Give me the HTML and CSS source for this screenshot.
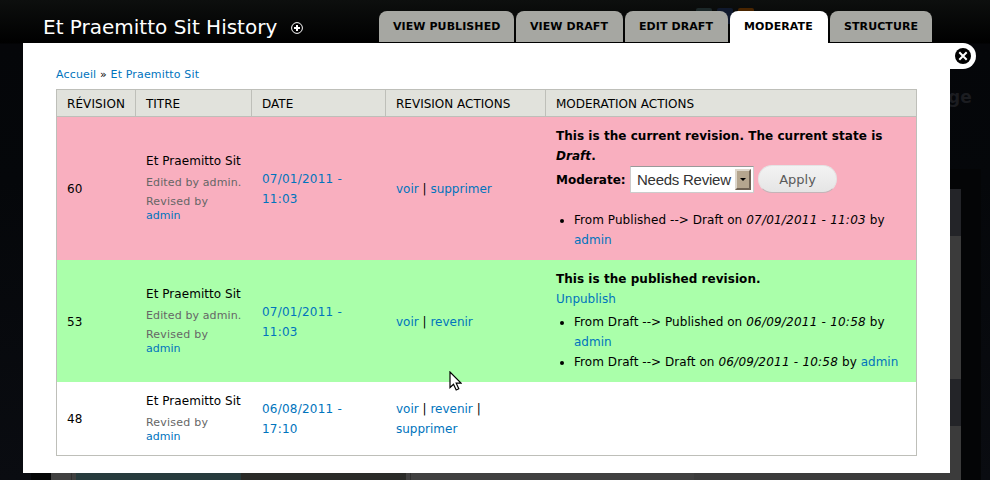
FILE: index.html
```html
<!DOCTYPE html>
<html lang="fr">
<head>
<meta charset="utf-8">
<title>Et Praemitto Sit History</title>
<link rel="stylesheet" href="styles.css">
</head>
<body>
<div class="backdrop" aria-hidden="true">
  <span class="social teal"></span><span class="social blue"></span><span class="social orange"></span>
  <span class="site-word">ge</span>
  <span class="site-edge"></span>
  <span class="site-side"></span>
  <span class="site-foot"></span>
</div>
<div class="overlay">
  <header class="overlay-head">
    <h1>Et Praemitto Sit History</h1>
    <svg class="shortcut" width="12" height="12" viewBox="0 0 12 12"><circle cx="6" cy="6" r="5.4" fill="#000" stroke="#fff"/><path d="M6 3v6M3 6h6" stroke="#fff" stroke-width="2"/></svg>
    <nav class="tabs">
      <a class="tab t1">VIEW PUBLISHED</a>
      <a class="tab t2">VIEW DRAFT</a>
      <a class="tab t3">EDIT DRAFT</a>
      <a class="tab t4 active">MODERATE</a>
      <a class="tab t5">STRUCTURE</a>
    </nav>
  </header>
  <main class="panel">
    <div class="close"><svg width="16" height="16" viewBox="0 0 16 16"><circle cx="8" cy="8" r="8" fill="#000"/><path d="M4.3 4.3l7.4 7.4M11.7 4.3l-7.4 7.4" stroke="#fff" stroke-width="2"/></svg></div>
    <div class="breadcrumb"><a>Accueil</a> » <a>Et Praemitto Sit</a></div>
    <table class="revisions">
      <colgroup><col class="c-rev"><col class="c-title"><col class="c-date"><col class="c-act"><col class="c-mod"></colgroup>
      <thead><tr><th>RÉVISION</th><th>TITRE</th><th>DATE</th><th>REVISION ACTIONS</th><th>MODERATION ACTIONS</th></tr></thead>
      <tbody>
        <tr class="current">
          <td>60</td>
          <td class="title">Et Praemitto Sit<p>Edited by admin.</p><p>Revised by <br><a>admin</a></p></td>
          <td class="date"><a>07/01/2011 -<br>11:03</a></td>
          <td><a>voir</a> | <a>supprimer</a></td>
          <td class="moderation"><strong>This is the current revision. The current state is<br><em>Draft</em>.</strong>
            <form class="moderate"><label>Moderate:</label><span class="select"><span>Needs Review</span><i class="arrow"></i></span><button type="button">Apply</button></form>
            <ul><li>From Published --&gt; Draft on <em>07/01/2011 - 11:03</em> by<br><a>admin</a></li></ul>
          </td>
        </tr>
        <tr class="published">
          <td>53</td>
          <td class="title">Et Praemitto Sit<p>Edited by admin.</p><p>Revised by <br><a>admin</a></p></td>
          <td class="date"><a>07/01/2011 -<br>11:03</a></td>
          <td><a>voir</a> | <a>revenir</a></td>
          <td class="moderation"><strong>This is the published revision.</strong><br><a>Unpublish</a>
            <ul><li>From Draft --&gt; Published on <em>06/09/2011 - 10:58</em> by<br><a>admin</a></li><li>From Draft --&gt; Draft on <em>06/09/2011 - 10:58</em> by <a>admin</a></li></ul>
          </td>
        </tr>
        <tr class="older">
          <td>48</td>
          <td class="title">Et Praemitto Sit<p>Revised by <br><a>admin</a></p></td>
          <td class="date"><a>06/08/2011 -<br>17:10</a></td>
          <td><a>voir</a> | <a>revenir</a> |<br><a>supprimer</a></td>
          <td></td>
        </tr>
      </tbody>
    </table>
  </main>
</div>
<svg class="cursor" width="13" height="20" viewBox="0 0 13 20"><path d="M1 1v15.5l3.5-3.3 2.7 5.8 2.6-1.2-2.6-5.6h4.8z" fill="#fff" stroke="#000" stroke-width="1.2"/></svg>
</body>
</html>
```

FILE: styles.css
```css
* { box-sizing: border-box; }
body {
  margin: 0;
  width: 990px;
  height: 480px;
  overflow: hidden;
  position: relative;
  background: linear-gradient(#0d0f0e, #000 43px, #050609 44px, #05070a 180px, #0a0c11 480px);
  font: 12px/20px "DejaVu Sans", sans-serif;
  color: #000;
}
a { color: #0074bd; text-decoration: none; }

/* dimmed site behind the overlay */
.backdrop { position: absolute; inset: 0; }
.backdrop span { position: absolute; }
.social { top: 8px; width: 16px; height: 16px; border-radius: 2px; }
.teal { left: 696px; background: #1c2829; }
.blue { left: 717px; background: #10192d; }
.orange { left: 738px; background: #4a2500; }
.site-word { left: 948px; top: 87px; font-size: 17px; font-weight: bold; color: #1b1c20; }
.site-edge { left: 31px; top: 169px; width: 950px; height: 311px; background: #040506; }
.site-side {
  left: 940px; top: 189px; width: 21px; height: 291px;
  background: linear-gradient(#232428 47px, #3b3b3b 47px 190px, #232428 190px 237px, #3b3b3b 237px);
}
.site-foot {
  left: 51px; top: 473px; width: 910px; height: 7px;
  background: linear-gradient(90deg, #404040 20px, #303030 20px 21px, #404040 21px 25px, #273b3d 25px 190px, #2a2b28 190px 355px, #404040 355px 359px, #303030 359px 360px, #404040 360px 643px, #3b3b3b 643px);
}

.overlay { position: relative; width: 927px; margin-left: 23px; }
.overlay-head { display: flex; height: 43px; padding-left: 20px; align-items: flex-start; }
h1 { margin: 15px 0 0; width: 248px; font-size: 20px; line-height: 24px; font-weight: normal; color: #fff; white-space: nowrap; }
.shortcut { margin-top: 22px; }
.tabs { display: flex; gap: 2px; margin: 11px 0 0 76px; }
.tab {
  height: 31px; padding-left: 14px; border-radius: 8px 8px 0 0;
  background: #a6a7a2; color: #000; font-size: 11px; font-weight: bold; line-height: 32px; letter-spacing: 0.08px; white-space: nowrap;
}
.tab.active { height: 32px; background: #fff; }
.t1 { width: 135px; }
.t2 { width: 107px; }
.t3 { width: 103px; }
.t4 { width: 98px; }
.t5 { width: 102px; }

.panel { position: relative; height: 430px; padding: 22px 33px 0; background: #fff; }
.close {
  position: absolute; left: 927px; top: 0; width: 26px; height: 26px; padding: 5px 0 0 5px;
  border-radius: 0 13px 13px 0; background: #fff;
}
.close svg { display: block; }
.breadcrumb { height: 24px; font-size: 11px; line-height: 20px; letter-spacing: 0.15px; }

.revisions { width: 861px; table-layout: fixed; border-collapse: separate; border-spacing: 0; border: 1px solid #bebfb9; }
.c-rev { width: 79px; }
.c-title { width: 116px; }
.c-date { width: 134px; }
.c-act { width: 160px; }
.c-mod { width: 370px; }
th {
  height: 27px; padding: 2px 0 0 10px; text-align: left; font-weight: normal;
  background: #e1e2dc; border-right: 1px solid #bebfb9; border-bottom: 1px solid #bebfb9; white-space: nowrap;
}
th:first-child { letter-spacing: 0.1px; }
th:last-child { border-right: 0; }
td { padding: 0 0 0 10px; vertical-align: middle; white-space: nowrap; }
.current td { height: 143px; background: #f9afbf; }
.published td { height: 122px; padding-top: 1px; background: #aaffaa; }
.older td { height: 73px; }
td.title { padding-bottom: 3px; letter-spacing: 0.05px; }
.published td.title { padding-bottom: 4px; }
.older td.title { padding-bottom: 2px; }
.title p { margin: 5px 0 0; font-size: 11px; line-height: 14px; letter-spacing: 0.12px; color: #666; }
.title p + p { letter-spacing: 0.22px; }
.title p + p a, .older p a { letter-spacing: 0; }
.older .title p { letter-spacing: 0.22px; }
.date { letter-spacing: 0.22px; }
.current .moderation { vertical-align: top; padding-top: 9px; }
.published .moderation { vertical-align: top; padding-top: 9px; }
strong { letter-spacing: 0.04px; }
ul { margin: 3px 0 0; padding-left: 18px; list-style: disc; }
li { letter-spacing: 0.06px; }
li em { letter-spacing: 0.22px; }
li a { letter-spacing: 0; }
.current ul { margin-top: 17px; }
.moderate { display: flex; height: 27px; margin: 0; line-height: 28px; }
.moderate label { width: 74px; font-weight: bold; }
.select {
  display: flex; width: 124px; height: 27px; padding: 2px 2px 2px 6px; justify-content: space-between;
  background: #fff; border: 1px solid #ccc; border-top-color: #999;
  font: 15px/21px "Liberation Sans", sans-serif; letter-spacing: -0.25px; color: #333;
}
.arrow {
  display: flex; width: 16px; height: 21px; justify-content: center; align-items: center;
  background: #b5a68f; border: 2px solid; border-color: #ddd6cb #6f6254 #6f6254 #ddd6cb;
}
.arrow::after { content: ""; border: 3px solid transparent; border-top-color: #000; border-bottom: 0; }
button {
  width: 79px; height: 28px; margin: -1px 0 0 4px; padding: 0; border: 1px solid #e4e4e4; border-bottom-color: #c4b4b8;
  border-radius: 14px; background: linear-gradient(#f3f3f3, #e5e5e5); color: #5a5a5a; font: 13px "DejaVu Sans", sans-serif;
}
.cursor { position: absolute; left: 449px; top: 371px; }
```
